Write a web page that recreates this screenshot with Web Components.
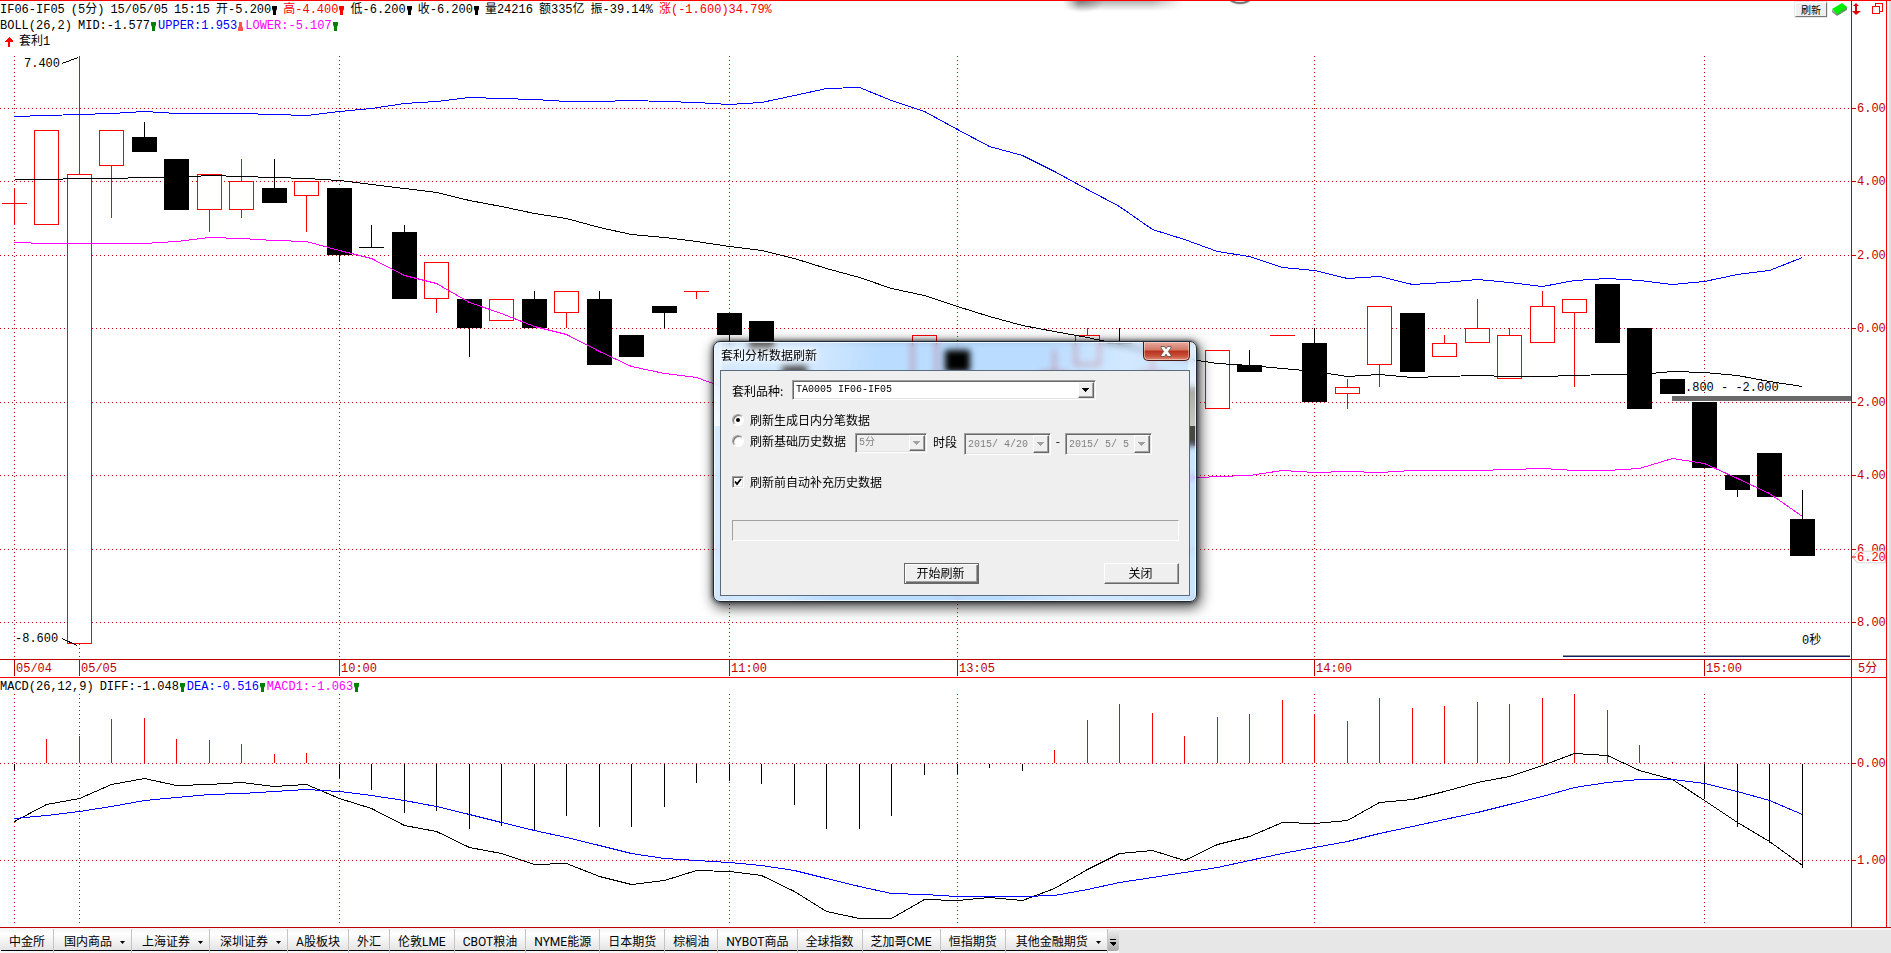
<!DOCTYPE html>
<html lang="zh-CN">
<head>
<meta charset="utf-8">
<title>IF06-IF05 套利分析</title>
<style>
  html, body { margin: 0; }
  body {
    background: #fff;
    color: #000;
    font: 12px/16px "Liberation Mono", "Noto Sans CJK SC", monospace;
    overflow-x: hidden;
  }
</style>
</head>
<body>
<trade-workspace></trade-workspace>
<refresh-dialog caption="套利分析数据刷新"></refresh-dialog>

<script>
const SVG_NS = 'http://www.w3.org/2000/svg';
const STEP = 32.518;
const FIRST_X = 13.5;
const barX = i => Math.round(FIRST_X + i * STEP);
const priceY = v => Math.round(328 - v * 36.75);
const GRID_X = [0, 2, 10, 22, 29, 40, 52].map(barX);

function define(name, markup, connected) {
  const template = document.createElement('template');
  template.innerHTML = markup;
  customElements.define(name, class extends HTMLElement {
    constructor() {
      super();
      this.attachShadow({ mode: 'open' }).append(template.content.cloneNode(true));
    }
    connectedCallback() { if (connected) connected.call(this, this.shadowRoot); }
  });
}

function shape(parent, tag, attrs) {
  const el = document.createElementNS(SVG_NS, tag);
  for (const key in attrs) el.setAttribute(key, attrs[key]);
  parent.append(el);
  return el;
}

function polyline(svg, ys, color) {
  shape(svg, 'polyline', {
    points: ys.map((y, i) => barX(i) + '.5,' + y + '.5').join(' '),
    fill: 'none', stroke: color
  });
}

function grid(svg, rows, top, bottom) {
  const style = { stroke: '#c00000', 'stroke-dasharray': '1 3', fill: 'none' };
  rows.forEach(y => shape(svg, 'path', { d: `M0 ${y}.5H1851`, ...style }));
  GRID_X.forEach(x => shape(svg, 'path', { d: `M${x}.5 ${top}V${bottom}`, ...style }));
}

/* open, close, high, low; "r" hollow red, "k" solid black */
const CANDLES = [
  ['r',3.4,3.4,3.8,2.8],['r',5.4,2.8],['r',4.2,-8.6,7.4],['r',5.4,4.4,5.4,3.0],['k',5.2,4.8,5.6],
  ['k',4.6,3.2],['r',4.2,3.2,4.2,2.6],['r',4.0,3.2,4.6,3.0],['k',3.8,3.4,4.6],['r',4.0,3.6,4.0,2.6],
  ['k',3.8,2.0,3.8,1.8],['k',2.2,2.2,2.8],['k',2.6,0.8,2.8],['r',1.8,0.8,1.8,0.4],['k',0.8,0,0.8,-0.8],
  ['r',0.8,0.2],['k',0.8,0,1.0],['r',1.0,0.4,1.0,0],['k',0.8,-1.0,1.0],['k',-0.2,-0.8],
  ['k',0.6,0.4,0.6,0],['r',1.0,1.0,1.0,0.8],['k',0.4,-0.2,0.4,-0.6],['k',0.2,-0.6],['k',-1.0,-2.0],
  ['k',-1.6,-2.4],['k',-2.0,-2.6],['r',-1.6,-2.4],['r',-0.2,-1.6],['k',-0.6,-1.2],
  ['r',-1.6,-2.0],['r',-1.4,-2.0],['r',-1.2,-1.8,-0.6],['r',-0.2,-1.0,0],['k',-0.4,-0.4,0],
  ['r',-1.2,-1.6,-0.6],['k',-1.6,-3.2],['r',-0.6,-2.2],['k',-1.0,-1.2,-0.6],['r',-0.2,-0.2],
  ['k',-0.4,-2.0,0],['r',-1.6,-1.8,-1.4,-2.2],['r',0.6,-1.0,0.6,-1.6],['k',0.4,-1.2],['r',-0.4,-0.8,-0.2],
  ['r',0,-0.4,0.8],['r',-0.2,-1.4,0],['r',0.6,-0.4,1.0],['r',0.8,0.4,0.8,-1.6],['k',1.2,-0.4],
  ['k',0,-2.2],['k',-1.4,-1.8],['k',-2.0,-3.8],['k',-4.0,-4.4,-4.0,-4.6],['k',-3.4,-4.6],['k',-5.2,-6.2,-4.4]
];
const UPPER = [116,115,114,113,111,113,113,113,114,115,111,108,103,101,97,98,99,101,101,100,101,102,104,102,95,88,87,100,111,129,146,155,171,189,206,229,239,251,256,267,270,278,276,284,282,279,282,286,280,278,280,284,281,274,270,257];
const MID = [179,179,178,178,177,177,175,176,177,178,180,184,188,192,200,206,213,218,227,234,237,241,246,250,258,268,277,288,295,306,316,325,331,337,344,352,358,363,365,368,371,376,374,377,376,375,376,376,375,374,374,371,372,375,381,386];
const LOWER = [242,243,243,243,243,241,237,238,240,241,250,258,275,283,302,313,326,334,351,366,373,377,389,400,410,420,430,440,448,455,460,465,470,474,477,480,478,476,475,470,472,471,472,470,470,470,469,468,470,470,468,458,463,478,493,516];

const HISTOGRAM = [770,739,736,719,718,739,740,744,754,753,778,790,813,811,829,826,830,816,827,827,807,783,781,784,805,829,829,816,775,774,768,771,750,720,704,713,736,717,714,700,714,721,698,708,706,702,704,698,694,710,745,762,799,827,843,868];
const DIFF = [821,804,798,784,778,785,784,782,786,784,798,808,825,831,847,853,864,863,876,884,880,870,871,875,891,911,918,918,899,900,897,900,888,869,853,850,860,844,836,822,823,820,802,799,791,782,776,765,753,755,770,779,800,822,841,865];
const DEA = [818,815,811,806,800,797,794,793,791,789,791,795,800,806,814,822,830,837,845,853,858,860,862,865,870,878,886,893,894,896,896,896,895,889,882,877,872,867,860,853,847,841,833,826,819,812,804,796,787,782,779,779,783,791,800,814];

/* One reading of a status line, with an optional trend marker behind it. */
define('quote-field', `
  <style>
    :host { display: flex; align-items: center; white-space: nowrap; }
    svg { display: none; width: 5px; height: 9px; margin-left: 1px; }
    :host([trend]) svg { display: block; }
    :host([trend="up"]) svg { transform: rotate(180deg); }
  </style>
  <slot></slot>
  <svg viewBox="0 0 5 9" aria-hidden="true"><path d="M0 0h5v3l-1 2v4H1V5L0 3z" fill="currentColor"/></svg>`,
  function (root) {
    root.querySelector('path').style.fill = this.getAttribute('mark') || 'currentColor';
  });

define('quote-line', `
  <style>
    :host { display: flex; align-items: center; height: 16px; gap: 6px; }
    :host([tight]) { gap: 2px; }
    ::slotted(.lead) { margin-right: 4px; }
  </style><slot></slot>`);

/* A label pinned at a data point of the surrounding canvas. */
define('chart-note', `
  <style>:host { position: absolute; transform: translateY(-50%); white-space: nowrap; }</style><slot></slot>`,
  function () {
    this.style.left = this.getAttribute('x') / 1851 * 100 + '%';
    this.style.top = (this.getAttribute('y') - 1) / 658 * 100 + '%';
  });

define('price-chart', `
  <style>
    :host { position: absolute; inset: 0; display: block; }
    svg { display: block; width: 100%; height: 100%; shape-rendering: crispEdges; }
  </style>
  <svg viewBox="0 1 1851 658" preserveAspectRatio="none" role="img" aria-label="K线图"></svg>
  <chart-note x="24" y="64">7.400</chart-note>
  <chart-note x="15" y="639">-8.600</chart-note>
  <chart-note x="1685" y="388">.800 - -2.000</chart-note>
  <chart-note x="1802" y="641">0秒</chart-note>`,
  function (root) {
    const svg = root.querySelector('svg');
    grid(svg, [108, 181, 255, 328, 402, 475, 549, 622], 56, 659);
    CANDLES.forEach(([kind, open, close, high = open, low = close], i) => {
      const x = barX(i), top = priceY(open), bottom = priceY(close);
      const color = kind === 'r' ? '#ff0000' : '#000000';
      shape(svg, 'path', { d: `M${x}.5 ${priceY(high)}V${top}M${x}.5 ${bottom}V${priceY(low)}`, stroke: color });
      if (open === close) shape(svg, 'path', { d: `M${x - 12} ${top}.5h25`, stroke: color });
      else if (kind === 'r') shape(svg, 'rect', { x: x - 11.5, y: top + .5, width: 24, height: bottom - top - 1, fill: '#fff', stroke: color });
      else shape(svg, 'rect', { x: x - 12, y: top, width: 25, height: bottom - top, fill: color });
    });
    shape(svg, 'rect', { x: 1672, y: 396, width: 179, height: 5, fill: '#696969' });
    shape(svg, 'path', { d: 'M1563 655.5h287', stroke: '#909090' });
    shape(svg, 'path', { d: 'M1563 656.5h287', stroke: '#102070' });
    polyline(svg, MID, '#000000');
    polyline(svg, UPPER, '#0000ff');
    polyline(svg, LOWER, '#ff00ff');
    shape(svg, 'path', { d: 'M62 63.5L78 57.5M62 638.5L77 645.5', stroke: '#000' });
  });

define('macd-chart', `
  <style>
    :host { position: absolute; inset: 0; display: block; }
    svg { display: block; width: 100%; height: 100%; shape-rendering: crispEdges; }
  </style>
  <svg viewBox="0 678 1851 249" preserveAspectRatio="none" role="img" aria-label="MACD"></svg>`,
  function (root) {
    const svg = root.querySelector('svg');
    grid(svg, [763, 860], 694, 924);
    HISTOGRAM.forEach((y, i) => shape(svg, 'path', {
      d: `M${barX(i)}.5 ${y < 763 ? 763 : 764}V${y}`, stroke: y < 763 ? '#ff0000' : '#000000'
    }));
    polyline(svg, DIFF, '#000000');
    polyline(svg, DEA, '#0000ff');
  });

/* Vertical scale: ticks="position:label ..." with positions in chart rows. */
define('value-axis', `
  <style>
    :host { position: relative; display: block; border-left: 1px solid #c00000; color: #c00000; }
    .tick { position: absolute; left: 0; padding-left: 5px; transform: translateY(-50%); line-height: 18px; height: 16px; }
    .tick::before { content: ""; position: absolute; left: 0; top: 8px; width: 4px; height: 1px; background: #c00000; }
    .last { position: absolute; left: 0; width: 34px; height: 13px; transform: translateY(-50%); color: #ff0000; }
    .last svg { position: absolute; inset: 0; }
    .last span { position: relative; display: block; line-height: 15px; padding-left: 5px; }
    .last i { position: absolute; left: 0; top: 6px; width: 4px; height: 1px; background: #ff0000; }
  </style><slot></slot>`,
  function (root) {
    const [start, length] = this.getAttribute('range').split(' ').map(Number);
    const place = (el, y) => { el.style.top = (y - start) / length * 100 + '%'; root.append(el); };
    this.getAttribute('ticks').split(' ').forEach(pair => {
      const [y, label] = pair.split(':');
      const el = document.createElement('div');
      el.className = 'tick';
      el.textContent = label;
      place(el, +y);
    });
    if (this.hasAttribute('last')) {
      const [y, label] = this.getAttribute('last').split(':');
      const el = document.createElement('div');
      el.className = 'last';
      el.innerHTML = `<svg width="34" height="13" viewBox="0 0 34 13"><path d="M.5 6.5l5-6h28v12h-28z" fill="#fff" stroke="#c4c4c4"/></svg><i></i><span>${label}</span>`;
      place(el, +y + .5);
    }
  });

define('time-axis', `
  <style>
    :host { display: grid; grid-template-columns: 1fr 35px; height: 17px; border-top: 1px solid #c00000; border-bottom: 1px solid #ff0000; color: #c00000; line-height: 18px; flex: none; }
    .scale { position: relative; }
    .scale span { position: absolute; top: 0; height: 16px; border-left: 1px solid #c00000; padding-left: 1px; }
    .unit { border-left: 1px solid #c00000; padding-left: 6px; white-space: nowrap; }
  </style><div class="scale"></div><div class="unit"><slot></slot></div>`,
  function (root) {
    const scale = root.querySelector('.scale');
    ['05/04', '05/05', '10:00', '11:00', '13:05', '14:00', '15:00'].forEach((label, i) => {
      const el = document.createElement('span');
      el.textContent = label;
      el.style.left = GRID_X[i] / 1851 * 100 + '%';
      scale.append(el);
    });
  });

define('market-tab', `
  <style>
    :host { display: block; border-right: 1px solid #c4c4c4; }
    button {
      display: flex; align-items: center; gap: 8px; height: 22px; padding: 5px 8px 0; border: 0;
      border-bottom: 1px solid #000; background: none; color: #000; white-space: nowrap;
      font: 12px/16px Roboto, "Noto Sans CJK SC", sans-serif;
    }
    svg { display: none; }
    :host([menu]) button { padding: 5px 6px 0 10px; }
    :host([menu]) svg { display: block; }
  </style>
  <button type="button"><slot></slot><svg width="5" height="3" viewBox="0 0 5 3"><path d="M0 0h5L2.500 3z"/></svg></button>`);

define('market-tabs', `
  <style>
    :host { display: flex; align-items: flex-start; height: 25px; background: linear-gradient(#f2f2f2 2px, #e7e7e7 2px); flex: none; }
    nav { display: flex; height: 25px; padding-left: 1px; background: linear-gradient(#f4f4f4, #fff 6px, #e4e4e4 22px, #f6f6f6 22px); box-sizing: border-box; }
    .tabs { display: flex; padding-top: 1px; }
    .more { width: 11px; height: 22px; margin-top: 1px; padding: 0; border: 0; border-radius: 0 3px 3px 0; background: linear-gradient(#f0f0f0, #aaa); display: grid; place-items: end center; }
    .more svg { margin-bottom: 4px; }
  </style>
  <nav aria-label="市场"><div class="tabs"><slot></slot></div>
    <button class="more" type="button" aria-label="更多"><svg width="6" height="8" viewBox="0 0 6 8" shape-rendering="crispEdges"><path d="M0 0h6v1H0zM0 3h6v1L3 7L0 4z"/></svg></button>
  </nav>`);

define('trade-workspace', `
  <style>
    :host { display: flex; flex-direction: column; min-height: 100vh; }
    .frame { flex: 1; display: flex; border-top: 1px solid #ff0000; border-bottom: 1px solid #c00000; }
    main { flex: 1; min-width: 0; display: flex; flex-direction: column; border-right: 1px solid #ff0000; }
    .edge { width: 2px; margin-left: 2px; background: #e0e0e0; }
    .pane { display: grid; grid-template-columns: 1fr 35px; min-height: 0; }
    .price { flex: 658 0 0; min-height: 400px; }
    .macd { flex: 249 0 0; min-height: 150px; }
    .plot { position: relative; min-width: 0; overflow: hidden; }
    header { position: relative; display: flex; justify-content: space-between; align-items: flex-start; }
    .readings { padding-top: 1px; }
    .blue { color: #0000ff; } .red { color: #ff0000; } .pink { color: #ff00ff; }
    .tools { display: flex; gap: 4px; padding: 1px 3px 0 0; align-items: flex-start; }
    .refresh { width: 32px; height: 15px; padding: 0; background: #efefef; border: 1px solid; border-color: #fff #777 #777 #fff; box-shadow: 0 0 0 1px #e8e8e8; font: 10px/12px "Noto Sans CJK SC", sans-serif; color: #000; }
    .icon { display: block; padding: 0; border: 0; background: none; }
    .corner { position: relative; display: flex; justify-content: space-between; padding: 1px 3px 0 0; }
    .cast { position: absolute; top: 0; left: 57.4%; width: 122px; height: 12px; background: radial-gradient(ellipse 22px 12px at 20px 0, rgba(0,0,0,.3), transparent), linear-gradient(rgba(0,0,0,.3), transparent 10px); -webkit-mask: linear-gradient(90deg, transparent, #000 16px, #000 90px, transparent); }
    .knob { position: absolute; top: -9px; left: 66.4%; width: 22px; height: 12px; box-sizing: border-box; border: 2px solid #777; border-radius: 50%; background: #eee; box-shadow: 0 0 2px #888; }
  </style>
  <div class="frame">
    <main>
      <section class="pane price">
        <div class="plot">
          <div class="cast"></div><div class="knob"></div>
          <price-chart></price-chart>
          <header>
            <div class="readings">
              <quote-line>
                <quote-field>IF06-IF05</quote-field><quote-field>(5分)</quote-field><quote-field>15/05/05</quote-field><quote-field>15:15</quote-field>
                <quote-field trend="down">开-5.200</quote-field>
                <quote-field trend="down" class="red">高-4.400</quote-field>
                <quote-field trend="down">低-6.200</quote-field>
                <quote-field trend="down">收-6.200</quote-field>
                <quote-field>量24216</quote-field><quote-field>额335亿</quote-field><quote-field>振-39.14%</quote-field>
                <quote-field class="red">涨(-1.600)34.79%</quote-field>
              </quote-line>
              <quote-line tight>
                <quote-field class="lead">BOLL(26,2)</quote-field>
                <quote-field trend="down" mark="#008000">MID:-1.577</quote-field>
                <quote-field trend="up" mark="#ff5050" class="blue">UPPER:1.953</quote-field>
                <quote-field trend="down" mark="#008000" class="pink">LOWER:-5.107</quote-field>
              </quote-line>
              <quote-line>
                <svg width="13" height="10" viewBox="0 0 13 10" shape-rendering="crispEdges" aria-hidden="true"><path d="M9 0l4 4v1h-3v5H8V5H5V4z" fill="#f00"/></svg>
                <quote-field>套利1</quote-field>
              </quote-line>
            </div>
            <div class="tools">
              <button class="refresh" type="button">刷新</button>
              <button class="icon" type="button" aria-label="行情源"><svg width="17" height="14" viewBox="0 0 17 14"><path d="M1 7L11 1l5 4-10 8z" fill="#00f000"/><path d="M1 8l5 4v2l-5-4zM6 12l10-7v3l-10 6z" fill="#8a8a8a"/><path d="M7 13v-2M9 12v-2M11 10v-2M13 9v-2M15 7v-2" stroke="#00c800"/></svg></button>
            </div>
          </header>
        </div>
        <value-axis range="1 658" ticks="108:6.00 181:4.00 255:2.00 328:0.00 402:2.00 475:4.00 549:6.00 622:8.00" last="556:6.20">
          <div class="corner">
            <button class="icon" type="button" aria-label="调整"><svg width="9" height="13" viewBox="0 0 9 13"><path d="M4 1l3 3H5v5h4l-5 4-4-4h3V4H1z" fill="#e00000"/></svg></button>
            <button class="icon" type="button" aria-label="还原"><svg width="11" height="12" viewBox="0 0 11 12" shape-rendering="crispEdges" fill="none" stroke="#f00"><path d="M.5 3.500h7v7h-7zM3.500 3V.5h7v8h-3"/></svg></button>
          </div>
        </value-axis>
      </section>
      <time-axis>5分</time-axis>
      <section class="pane macd">
        <div class="plot">
          <macd-chart></macd-chart>
          <header>
            <div class="readings">
              <quote-line tight>
                <quote-field class="lead">MACD(26,12,9)</quote-field>
                <quote-field trend="down" mark="#008000">DIFF:-1.048</quote-field>
                <quote-field trend="down" mark="#008000" class="blue">DEA:-0.516</quote-field>
                <quote-field trend="down" mark="#008000" class="pink">MACD1:-1.063</quote-field>
              </quote-line>
            </div>
          </header>
        </div>
        <value-axis range="678 249" ticks="763:0.00 860:1.00"></value-axis>
      </section>
    </main>
    <div class="edge"></div>
  </div>
  <market-tabs>
    <market-tab>中金所</market-tab><market-tab menu>国内商品</market-tab><market-tab menu>上海证券</market-tab><market-tab menu>深圳证券</market-tab><market-tab>A股板块</market-tab><market-tab>外汇</market-tab><market-tab>伦敦LME</market-tab><market-tab>CBOT粮油</market-tab><market-tab>NYME能源</market-tab><market-tab>日本期货</market-tab><market-tab>棕榈油</market-tab><market-tab>NYBOT商品</market-tab><market-tab>全球指数</market-tab><market-tab>芝加哥CME</market-tab><market-tab>恒指期货</market-tab><market-tab menu>其他金融期货</market-tab>
  </market-tabs>`);

const SUNKEN = 'border: 1px solid; border-color: #a0a0a0 #fff #fff #a0a0a0; box-shadow: inset 1px 1px #696969, inset -1px -1px #e3e3e3; box-sizing: border-box;';
const RAISED = 'border: 1px solid; border-color: #fff #696969 #696969 #fff; box-shadow: inset -1px -1px #a0a0a0; box-sizing: border-box; background: #efefef; padding: 0;';

define('classic-picker', `
  <style>
    :host { position: relative; display: block; height: 20px; }
    :host([date]) { height: 22px; }
    select, input {
      ${SUNKEN} display: block; width: 100%; height: 100%; margin: 0; padding: 0 18px 0 3px; border-radius: 0;
      appearance: none; background: #fff; color: #000; opacity: 1; white-space: pre;
      font: 10px/16px "Liberation Mono", "Noto Sans CJK SC", monospace;
    }
    :disabled { background: #efefef; color: #808080; }
    .drop { ${RAISED} position: absolute; right: 2px; top: 2px; bottom: 2px; width: 16px; display: grid; place-items: center; pointer-events: none; }
    .drop svg { fill: #000; }
    :host([off]) .drop svg { fill: #a0a0a0; }
  </style>
  <span class="drop"><svg width="7" height="4" viewBox="0 0 7 4" shape-rendering="crispEdges"><path d="M0 0h7L3.500 4z"/></svg></span>`,
  function (root) {
    const field = document.createElement(this.hasAttribute('date') ? 'input' : 'select');
    if (this.hasAttribute('date')) { field.type = 'text'; field.value = this.getAttribute('value'); }
    else field.add(new Option(this.getAttribute('value')));
    field.disabled = this.hasAttribute('off');
    field.setAttribute('aria-label', this.getAttribute('name'));
    root.querySelector('.drop').before(field);
  });

define('refresh-dialog', `
  <style>
    :host { position: absolute; left: 37.7%; top: 341px; width: 484px; display: block; font: 12px/16px "Noto Sans CJK SC", sans-serif; }
    .shadow, .blur, .tint, .gloss { position: absolute; inset: 0; border-radius: 7px; }
    .shadow { box-shadow: 0 0 5px rgba(0,0,0,.8), 2px 4px 13px 2px rgba(0,0,0,.65); }
    .blur { backdrop-filter: blur(3px); }
    .tint { background: #b9dcff; mix-blend-mode: multiply; }
    .gloss {
      box-sizing: border-box; border: 1px solid #1c2a38; box-shadow: inset 0 0 0 1px rgba(255,255,255,.75);
      background:
        linear-gradient(rgba(255,255,255,.3), rgba(255,255,255,.7) 84px, transparent 84px) 0 0 / 8px 100% no-repeat,
        linear-gradient(rgba(255,255,255,.3), rgba(255,255,255,.7) 84px, transparent 84px) 100% 0 / 8px 100% no-repeat,
        linear-gradient(100deg, rgba(255,255,255,.45), rgba(255,255,255,.3) 22%, rgba(255,255,255,0) 32%, rgba(255,255,255,0) 62%, rgba(255,255,255,.35) 78%, rgba(255,255,255,.25));
    }
    .window { position: relative; padding: 1px 7px 6px; }
    .bar { display: flex; justify-content: space-between; height: 28px; }
    h1 { margin: 0; padding: 5px 1px; font: inherit; text-shadow: 0 0 6px #fff, 0 0 8px #fff, 0 0 8px #fff; }
    .close { width: 47px; height: 19px; padding: 0; border: 1px solid #4a1a18; border-top: 0; border-radius: 0 0 5px 5px; background: linear-gradient(#e8a99c, #d27866 8px, #b8301c 9px, #c8503a 14px, #e09078); box-shadow: inset 0 0 0 1px rgba(255,255,255,.4); display: grid; place-items: center; }
    form { display: flex; flex-direction: column; border: 1px solid #5b6b7d; background: #efefef; padding: 9px 10px 11px 11px; }
    .row { display: flex; align-items: flex-start; }
    .product { gap: 2px; margin-bottom: 12px; }
    .product span { width: 58px; white-space: nowrap; padding-top: 3px; }
    .product classic-picker { width: 304px; }
    label { display: flex; align-items: center; gap: 6px; white-space: nowrap; }
    input { appearance: none; margin: 0; width: 12px; height: 12px; background: #fff; display: grid; place-items: center; ${SUNKEN} }
    [type=radio] { border-radius: 50%; box-shadow: inset 1px 1px 1px #696969; }
    [type=radio]:checked::before { content: ""; width: 4px; height: 4px; border-radius: 50%; background: #000; }
    .tick { position: relative; }
    .tick svg { position: absolute; left: 2px; top: 4px; }
    .history { margin: 5px 0 19px; height: 22px; }
    .history .period { width: 72px; margin-left: 9px; }
    .history .when { margin: 1px 7px 0 6px; }
    .history .dash { width: 14px; text-align: center; }
    .history [date] { width: 87px; }
    .progress { ${SUNKEN} height: 21px; margin: 30px 0 22px; box-shadow: none; }
    .actions { justify-content: flex-end; gap: 125px; }
    .actions button { ${RAISED} width: 75px; height: 21px; font: inherit; line-height: 17px; color: #000; padding: 0 2px 2px 0; }
    .actions .default { border-color: #696969; box-shadow: inset 1px 1px #fff, inset -1px -1px #696969, inset -2px -2px #a0a0a0; }
  </style>
  <div class="shadow"></div><div class="blur"></div><div class="tint"></div><div class="gloss"></div>
  <div class="window" role="dialog" aria-labelledby="title">
    <div class="bar"><h1 id="title"></h1>
      <button class="close" type="button" aria-label="关闭窗口"><svg width="12" height="11" viewBox="0 0 12 11"><path d="M1 .5h3.500L6 2.800 7.500.5H11v1.500L8.300 5.500 11 9v1.500H7.500L6 8.200 4.500 10.500H1V9l2.700-3.500L1 2z" fill="#fff" stroke="#5b4848" stroke-width=".8"/></svg></button>
    </div>
    <form>
      <div class="row product"><span>套利品种:</span><classic-picker name="套利品种" value="TA0005 IF06-IF05"></classic-picker></div>
      <label><input type="radio" name="mode" checked>刷新生成日内分笔数据</label>
      <div class="row history">
        <label><input type="radio" name="mode">刷新基础历史数据</label>
        <classic-picker class="period" off name="周期" value="5分"></classic-picker>
        <span class="when">时段</span>
        <classic-picker date off name="开始日期" value="2015/ 4/20"></classic-picker>
        <span class="dash">-</span>
        <classic-picker date off name="结束日期" value="2015/ 5/ 5"></classic-picker>
      </div>
      <label class="tick"><input type="checkbox" checked>刷新前自动补充历史数据<svg width="8" height="8" viewBox="0 0 8 8" aria-hidden="true"><path d="M1 3.500L3 6l4-5" fill="none" stroke="#000" stroke-width="1.800"/></svg></label>
      <div class="progress" role="progressbar" aria-label="刷新进度"></div>
      <div class="row actions"><button class="default" type="button">开始刷新</button><button type="button">关闭</button></div>
    </form>
  </div>`,
  function (root) { root.querySelector('h1').textContent = this.getAttribute('caption'); });
</script>
</body>
</html>
